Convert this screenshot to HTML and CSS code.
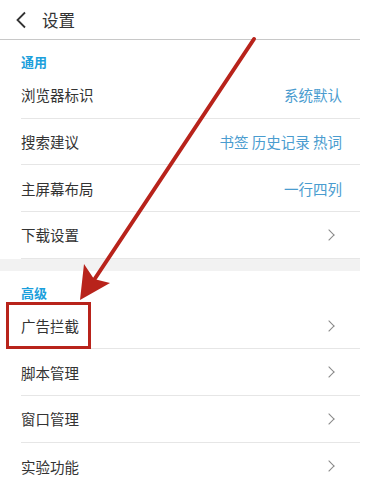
FILE: index.html
```html
<!DOCTYPE html>
<html lang="zh">
<head>
<meta charset="utf-8">
<link rel="stylesheet" href="styles.css">
</head>
<body>
<div class="page">
  <header class="topbar">
    <svg class="back" width="12" height="18" viewBox="0 0 12 18"><path d="M10 1.5 L2.5 9 L10 16.5" fill="none" stroke="#333" stroke-width="1.8"/></svg>
    <span class="title">设置</span>
  </header>

  <section class="group">
    <div class="group-title">通用</div>
    <div class="row"><span class="label">浏览器标识</span><span class="value">系统默认</span></div>
    <div class="row"><span class="label">搜索建议</span><span class="value">书签 历史记录 热词</span></div>
    <div class="row"><span class="label">主屏幕布局</span><span class="value">一行四列</span></div>
    <div class="row"><span class="label">下载设置</span><span class="chev"></span></div>
  </section>

  <div class="gap"></div>

  <section class="group">
    <div class="group-title">高级</div>
    <div class="row"><span class="label">广告拦截</span><span class="chev"></span></div>
    <div class="row"><span class="label">脚本管理</span><span class="chev"></span></div>
    <div class="row"><span class="label">窗口管理</span><span class="chev"></span></div>
    <div class="row last"><span class="label">实验功能</span><span class="chev"></span></div>
  </section>

  <div class="highlight"></div>
  <svg class="arrow" width="365" height="490" viewBox="0 0 365 490">
    <line x1="254" y1="39" x2="90" y2="286" stroke="#b8231b" stroke-width="4" stroke-linecap="round"/>
    <polygon points="80,300 84,264 94,279 110,283" fill="#b8231b"/>
  </svg>
</div>
</body>
</html>
```

FILE: styles.css
```css
html, body {
  margin: 0;
  padding: 0;
  background: #fff;
}
body {
  font-family: "Noto Sans CJK SC", "Noto Sans", sans-serif;
  color: #333;
}
.page {
  position: relative;
  width: 360px;
  height: 490px;
  overflow: hidden;
}
.topbar {
  height: 40px;
  display: flex;
  align-items: center;
  border-bottom: 1px solid #c8c8c8;
  box-sizing: border-box;
  padding-left: 15px;
}
.back {
  margin-right: 15px;
}
.title {
  font-size: 16.5px;
  color: #333;
}
.group-title {
  height: 32px;
  padding-left: 21px;
  display: flex;
  align-items: flex-end;
  font-size: 13px;
  font-weight: bold;
  color: #1b9fdc;
  box-sizing: border-box;
  padding-bottom: 1px;
}
.row {
  height: 46.7px;
  margin-left: 21px;
  display: flex;
  align-items: center;
  justify-content: space-between;
  border-bottom: 1px solid #e6e6e6;
  box-sizing: border-box;
  padding-right: 18px;
}
.row.last {
  border-bottom: none;
}
.label {
  font-size: 14.5px;
  color: #333;
}
.value {
  font-size: 14.5px;
  color: #4a9ccf;
}
.chev {
  width: 7px;
  height: 7px;
  border-top: 1px solid #888;
  border-right: 1px solid #888;
  transform: rotate(45deg);
  margin-right: 9px;
}
.gap {
  height: 12px;
  background: #f2f2f2;
}
.highlight {
  position: absolute;
  left: 6px;
  top: 302px;
  width: 85px;
  height: 47px;
  border: 3.5px solid #b8231b;
  box-sizing: border-box;
}
.arrow {
  position: absolute;
  left: 0;
  top: 0;
  pointer-events: none;
}
```
